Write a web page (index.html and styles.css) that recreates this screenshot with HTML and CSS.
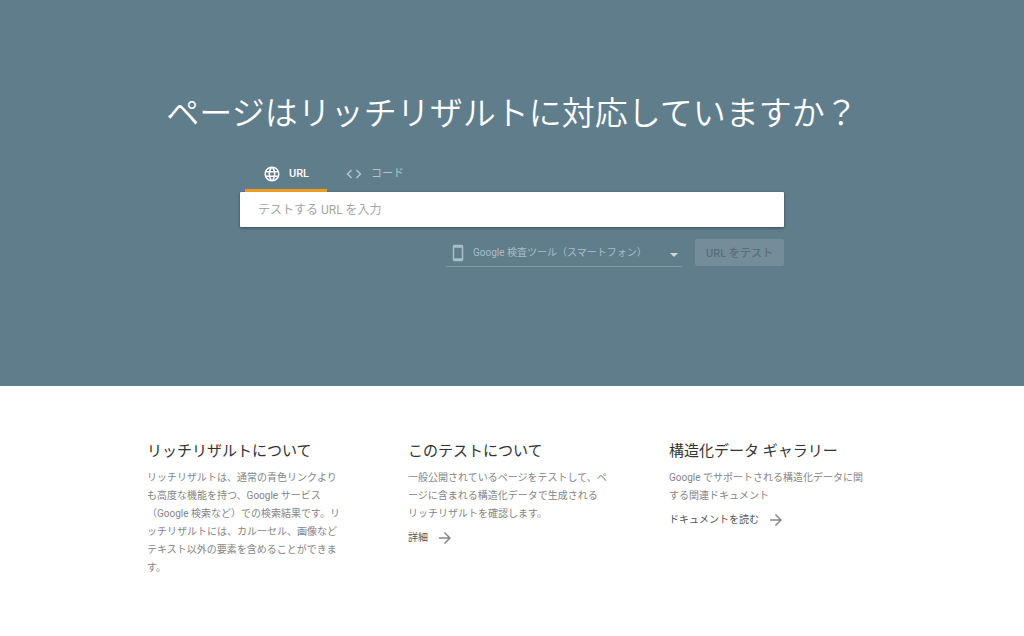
FILE: index.html
```html
<!DOCTYPE html>
<html lang="ja">
<head>
    <meta charset="UTF-8">
    <meta name="viewport" content="width=device-width, initial-scale=1.0">
    <title>リッチリザルト テスト</title>
    <link rel="stylesheet" href="styles.css">
</head>
<body>
    <header class="hero">
        <h1>ページはリッチリザルトに対応していますか？</h1>

        <form class="test-form" id="testForm">
            <div class="tabs" role="tablist">
                <button type="button" class="tab active" role="tab" aria-selected="true">
                    <svg class="icon" viewBox="0 0 24 24"><path d="M11.99 2C6.47 2 2 6.48 2 12s4.47 10 9.99 10C17.52 22 22 17.52 22 12S17.52 2 11.99 2zm6.93 6h-2.95c-.32-1.25-.78-2.45-1.38-3.56 1.84.63 3.37 1.91 4.33 3.56zM12 4.04c.83 1.2 1.48 2.53 1.91 3.96h-3.82c.43-1.43 1.08-2.76 1.91-3.96zM4.26 14C4.1 13.36 4 12.69 4 12s.1-1.36.26-2h3.38c-.08.66-.14 1.32-.14 2s.06 1.34.14 2H4.26zm.82 2h2.95c.32 1.25.78 2.45 1.38 3.56-1.84-.63-3.37-1.9-4.33-3.56zm2.95-8H5.08c.96-1.66 2.49-2.93 4.33-3.56C8.81 5.55 8.35 6.75 8.03 8zM12 19.96c-.83-1.2-1.48-2.53-1.91-3.96h3.82c-.43 1.43-1.08 2.76-1.91 3.96zM14.34 14H9.66c-.09-.66-.16-1.32-.16-2s.07-1.35.16-2h4.68c.09.65.16 1.32.16 2s-.07 1.34-.16 2zm.25 5.56c.6-1.11 1.06-2.31 1.38-3.56h2.95c-.96 1.65-2.49 2.93-4.33 3.56zM16.36 14c.08-.66.14-1.32.14-2s-.06-1.34-.14-2h3.38c.16.64.26 1.31.26 2s-.1 1.36-.26 2h-3.38z"/></svg>
                    <span>URL</span>
                </button>
                <button type="button" class="tab" role="tab" aria-selected="false">
                    <svg class="icon" viewBox="0 0 24 24"><path d="M9.4 16.6L4.8 12l4.6-4.6L8 6l-6 6 6 6 1.4-1.4zm5.2 0l4.6-4.6-4.6-4.6L16 6l6 6-6 6-1.4-1.4z"/></svg>
                    <span>コード</span>
                </button>
            </div>

            <input type="text" class="url-input" id="url" name="url" aria-label="テストする URL を入力" placeholder="テストする URL を入力">

            <div class="actions">
                <div class="agent">
                    <svg class="icon phone" viewBox="0 0 24 24"><path d="M17 1.01L7 1c-1.1 0-2 .9-2 2v18c0 1.1.9 2 2 2h10c1.1 0 2-.9 2-2V3c0-1.1-.9-1.99-2-1.99zM17 19H7V5h10v14z"/></svg>
                    <select id="agent" name="agent" aria-label="ユーザー エージェント">
                        <option>Google 検査ツール（スマートフォン）</option>
                        <option>Google 検査ツール（パソコン）</option>
                    </select>
                    <svg class="arrow" viewBox="0 0 8 4"><path d="M0 0h8L4 4z"/></svg>
                </div>
                <button type="submit" class="test-btn" disabled>URL をテスト</button>
            </div>
        </form>
    </header>

    <main class="info">
        <section>
            <h2>リッチリザルトについて</h2>
            <p>リッチリザルトは、通常の青色リンクより<br>も高度な機能を持つ、Google サービス<br>（Google 検索など）での検索結果です。リ<br>ッチリザルトには、カルーセル、画像など<br>テキスト以外の要素を含めることができま<br>す。</p>
        </section>
        <section>
            <h2>このテストについて</h2>
            <p>一般公開されているページをテストして、ペ<br>ージに含まれる構造化データで生成される<br>リッチリザルトを確認します。</p>
            <a href="#about">詳細
                <svg class="more" viewBox="0 0 24 24"><path d="M12 4l-1.41 1.41L16.17 11H4v2h12.17l-5.58 5.59L12 20l8-8z"/></svg>
            </a>
        </section>
        <section>
            <h2>構造化データ ギャラリー</h2>
            <p>Google でサポートされる構造化データに関<br>する関連ドキュメント</p>
            <a href="#docs">ドキュメントを読む
                <svg class="more" viewBox="0 0 24 24"><path d="M12 4l-1.41 1.41L16.17 11H4v2h12.17l-5.58 5.59L12 20l8-8z"/></svg>
            </a>
        </section>
    </main>
</body>
</html>
```

FILE: styles.css
```css
* {
    box-sizing: border-box;
}

body {
    margin: 0;
    background: white;
    color: #333;
    font-family: Roboto, "Noto Sans CJK JP", sans-serif;
    font-size: 10px;
}

button, input, select {
    font-family: inherit;
    border: none;
}

.hero {
    background-color: #607d8b;
    color: white;
    padding: 90px 20px 119px;
}

h1 {
    margin: 0 0 18px;
    font-size: 33px;
    font-weight: 350;
    line-height: 48px;
    text-align: center;
}

.test-form {
    max-width: 544px;
    margin: 0 auto;
}

.tabs {
    display: flex;
    padding-left: 5px;
}

.tab {
    display: flex;
    align-items: center;
    gap: 8px;
    height: 36px;
    padding: 3px 18px 0;
    background: none;
    border-bottom: 3px solid transparent;
    color: #b0c4cd;
    font-size: 11px;
    font-weight: 400;
    line-height: 18px;
    cursor: pointer;
}

.tab.active {
    color: white;
    border-bottom-color: #f29c1f;
    font-weight: 500;
}

.icon {
    width: 18px;
    height: 18px;
    fill: currentColor;
}

.url-input {
    display: block;
    width: 100%;
    height: 35px;
    padding: 0 18px;
    background: white;
    border-radius: 1px;
    box-shadow: 0 1px 3px rgba(0,0,0,0.4);
    color: #212121;
    font-size: 12px;
}

.url-input::placeholder {
    color: #a6a6a6;
}

.actions {
    display: flex;
    justify-content: flex-end;
    gap: 13px;
    margin-top: 12px;
}

.agent {
    display: flex;
    align-items: center;
    width: 236px;
    height: 28px;
    padding: 0 4px 0 3px;
    border-bottom: 1px solid #8199a4;
    color: #a9bec8;
}

.agent select {
    flex: 1;
    min-width: 0;
    padding: 0 0 0 6px;
    appearance: none;
    background: none;
    color: inherit;
    font-size: 10px;
}

.arrow {
    width: 8px;
    height: 4px;
    margin-top: 4px;
    fill: #cfd8dc;
}

.test-btn {
    width: 89px;
    height: 27px;
    padding: 0 0 2px;
    background-color: #758d99;
    border-radius: 2px;
    color: #576f7b;
    font-size: 11px;
    font-weight: 500;
}

.info {
    display: grid;
    grid-template-columns: repeat(3, 1fr);
    gap: 53px;
    max-width: 730px;
    margin: 0 auto;
    padding: 53px 0 40px;
}

h2 {
    margin: 0 0 6px;
    font-size: 15px;
    font-weight: 400;
    line-height: 24px;
}

p {
    margin: 0 0 6px;
    color: #858585;
    line-height: 18px;
    white-space: nowrap;
}

.info a {
    display: flex;
    align-items: center;
    gap: 8px;
    color: #555;
    line-height: 18px;
    text-decoration: none;
}

.more {
    width: 18px;
    height: 18px;
    fill: #8a8a8a;
}
```
